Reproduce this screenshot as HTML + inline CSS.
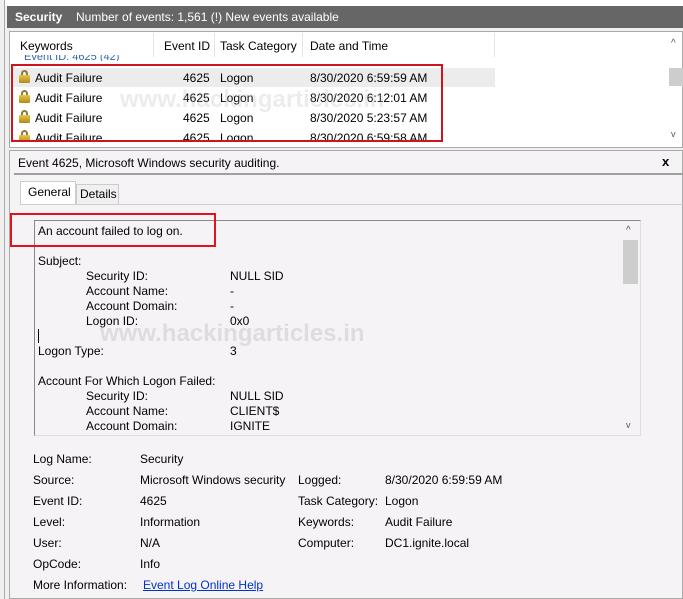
<!DOCTYPE html>
<html><head><style>
*{margin:0;padding:0;box-sizing:border-box}
body{width:683px;height:599px;overflow:hidden;background:#f0f0f0;font-family:"Liberation Sans",sans-serif;font-size:12px;color:#000;position:relative}
.a{position:absolute;white-space:nowrap}
.lock{position:absolute;width:11px;height:13px}
.lock:before{content:"";position:absolute;left:2px;top:0;width:7px;height:7px;border:2px solid #8a7a40;border-bottom:none;border-radius:4px 4px 0 0;box-sizing:border-box}
.lock:after{content:"";position:absolute;left:0;top:5px;width:11px;height:8px;background:linear-gradient(#e8c640,#b08a20);border-radius:1px}
</style></head><body>
<div class="a" style="left:0;top:0;width:683px;height:6px;background:#fff"></div>
<div class="a" style="left:0;top:0;width:5px;height:599px;background:#f0f0f0;border-right:1px solid #aaa"></div>
<div class="a" style="left:7px;top:6px;width:676px;height:22px;background:#666"></div>
<div class="a" style="left:15px;top:10px;color:#fff;font-weight:bold;font-size:12px">Security</div>
<div class="a" style="left:76px;top:10px;color:#fff">Number of events: 1,561 (!) New events available</div>
<div class="a" style="left:9px;top:31px;width:674px;height:117px;background:#fff;border:1px solid #aaa"></div>
<div class="a" style="left:20px;top:39px">Keywords</div>
<div class="a" style="left:153px;top:33px;width:1px;height:24px;background:#e5e5e5"></div>
<div class="a" style="left:164px;top:39px">Event ID</div>
<div class="a" style="left:214px;top:33px;width:1px;height:24px;background:#e5e5e5"></div>
<div class="a" style="left:220px;top:39px">Task Category</div>
<div class="a" style="left:302px;top:33px;width:1px;height:24px;background:#e5e5e5"></div>
<div class="a" style="left:310px;top:39px">Date and Time</div>
<div class="a" style="left:494px;top:33px;width:1px;height:24px;background:#e5e5e5"></div>
<div class="a" style="left:24px;top:55px;color:#3366aa;font-size:11px;height:6px;overflow:hidden;line-height:4px">Event ID: 4625 (42)</div>
<div class="a" style="left:12px;top:68px;width:483px;height:19px;background:#ececec"></div>
<div class="lock" style="left:19px;top:70px"></div><div class="a" style="left:35px;top:71px">Audit Failure</div><div class="a" style="left:183px;top:71px">4625</div><div class="a" style="left:220px;top:71px">Logon</div><div class="a" style="left:310px;top:71px">8/30/2020 6:59:59 AM</div>
<div class="lock" style="left:19px;top:90px"></div><div class="a" style="left:35px;top:91px">Audit Failure</div><div class="a" style="left:183px;top:91px">4625</div><div class="a" style="left:220px;top:91px">Logon</div><div class="a" style="left:310px;top:91px">8/30/2020 6:12:01 AM</div>
<div class="lock" style="left:19px;top:110px"></div><div class="a" style="left:35px;top:111px">Audit Failure</div><div class="a" style="left:183px;top:111px">4625</div><div class="a" style="left:220px;top:111px">Logon</div><div class="a" style="left:310px;top:111px">8/30/2020 5:23:57 AM</div>
<div class="a" style="left:12px;top:129px;width:480px;height:13px;overflow:hidden"><div class="lock" style="left:7px;top:1px"></div><div class="a" style="left:23px;top:2px">Audit Failure</div><div class="a" style="left:171px;top:2px">4625</div><div class="a" style="left:208px;top:2px">Logon</div><div class="a" style="left:298px;top:2px">8/30/2020 6:59:58 AM</div></div>
<div class="a" style="left:669px;top:68px;width:14px;height:18px;background:#cdcdcd"></div>
<div class="a" style="left:671px;top:38px;font-size:10px;color:#555">^</div>
<div class="a" style="left:671px;top:129px;font-size:9px;color:#555">v</div>
<div class="a" style="left:11px;top:64px;width:432px;height:78px;border:2px solid #d0141c"></div>
<div class="a" style="left:120px;top:86px;font-size:24px;font-weight:bold;color:rgba(180,180,180,0.25)">www.hackingarticles.in</div>
<div class="a" style="left:9px;top:150px;width:674px;height:449px;background:#f6f3f6;border:1px solid #aaa"></div>
<div class="a" style="left:18px;top:156px">Event 4625, Microsoft Windows security auditing.</div>
<div class="a" style="left:662px;top:154px;font-weight:bold;font-size:13px">x</div>
<div class="a" style="left:14px;top:173px;width:669px;height:2px;background:#a0a0a0"></div>
<div class="a" style="left:20px;top:181px;width:56px;height:24px;background:#fff;border:1px solid #ccc;border-bottom:none"></div>
<div class="a" style="left:28px;top:185px">General</div>
<div class="a" style="left:76px;top:184px;width:43px;height:20px;border:1px solid #ccc;border-bottom:none;background:#f0f0f0"></div>
<div class="a" style="left:80px;top:187px">Details</div>
<div class="a" style="left:20px;top:204px;width:663px;height:1px;background:#ccc"></div>
<div class="a" style="left:34px;top:220px;width:607px;height:216px;background:#f6f3f6;border:1px solid #888;border-right-color:#ddd;border-bottom-color:#ddd"></div>
<div class="a" style="left:623px;top:240px;width:15px;height:44px;background:#cdcdcd"></div>
<div class="a" style="left:626px;top:225px;font-size:10px;color:#555">^</div>
<div class="a" style="left:626px;top:420px;font-size:9px;color:#555">v</div>
<div class="a" style="left:38px;top:224px">An account failed to log on.</div>
<div class="a" style="left:10px;top:213px;width:206px;height:34px;border:2px solid #e0141c"></div>
<div class="a" style="left:38px;top:254px">Subject:</div>
<div class="a" style="left:86px;top:269px">Security ID:</div><div class="a" style="left:230px;top:269px">NULL SID</div>
<div class="a" style="left:86px;top:284px">Account Name:</div><div class="a" style="left:230px;top:284px">-</div>
<div class="a" style="left:86px;top:299px">Account Domain:</div><div class="a" style="left:230px;top:299px">-</div>
<div class="a" style="left:86px;top:314px">Logon ID:</div><div class="a" style="left:230px;top:314px">0x0</div>
<div class="a" style="left:38px;top:329px;width:1px;height:14px;background:#000"></div>
<div class="a" style="left:100px;top:320px;font-size:24px;font-weight:bold;color:rgba(170,170,170,0.3)">www.hackingarticles.in</div>
<div class="a" style="left:38px;top:344px">Logon Type:</div><div class="a" style="left:230px;top:344px">3</div>
<div class="a" style="left:38px;top:374px">Account For Which Logon Failed:</div>
<div class="a" style="left:86px;top:389px">Security ID:</div><div class="a" style="left:230px;top:389px">NULL SID</div>
<div class="a" style="left:86px;top:404px">Account Name:</div><div class="a" style="left:230px;top:404px">CLIENT$</div>
<div class="a" style="left:86px;top:419px">Account Domain:</div><div class="a" style="left:230px;top:419px">IGNITE</div>
<div class="a" style="left:33px;top:452px">Log Name:</div><div class="a" style="left:140px;top:452px">Security</div>
<div class="a" style="left:33px;top:473px">Source:</div><div class="a" style="left:140px;top:473px">Microsoft Windows security</div>
<div class="a" style="left:298px;top:473px">Logged:</div><div class="a" style="left:385px;top:473px">8/30/2020 6:59:59 AM</div>
<div class="a" style="left:33px;top:494px">Event ID:</div><div class="a" style="left:140px;top:494px">4625</div>
<div class="a" style="left:298px;top:494px">Task Category:</div><div class="a" style="left:385px;top:494px">Logon</div>
<div class="a" style="left:33px;top:515px">Level:</div><div class="a" style="left:140px;top:515px">Information</div>
<div class="a" style="left:298px;top:515px">Keywords:</div><div class="a" style="left:385px;top:515px">Audit Failure</div>
<div class="a" style="left:33px;top:536px">User:</div><div class="a" style="left:140px;top:536px">N/A</div>
<div class="a" style="left:298px;top:536px">Computer:</div><div class="a" style="left:385px;top:536px">DC1.ignite.local</div>
<div class="a" style="left:33px;top:557px">OpCode:</div><div class="a" style="left:140px;top:557px">Info</div>
<div class="a" style="left:33px;top:578px">More Information:</div><div class="a" style="left:143px;top:578px;color:#0033cc;text-decoration:underline">Event Log Online Help</div>
</body></html>
